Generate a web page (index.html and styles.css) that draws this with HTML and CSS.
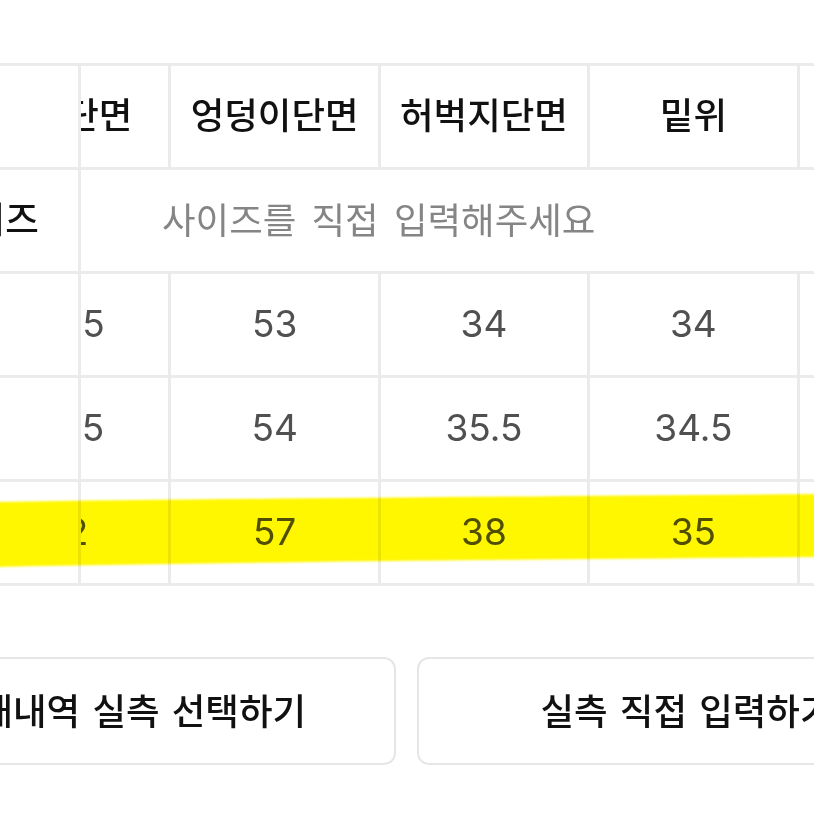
FILE: index.html
```html
<!DOCTYPE html>
<html lang="ko">
<head>
<meta charset="utf-8">
<title>실측 사이즈</title>
<link rel="stylesheet" href="styles.css">
</head>
<body>
<div class="page">
  <div class="screen">
    <div class="size-table">
      <div class="fixed-col">
        <div class="cell head"></div>
        <div class="cell label">사이즈</div>
        <div class="cell num">S</div>
        <div class="cell num">M</div>
        <div class="cell num">L</div>
      </div>
      <div class="scroll-view">
        <div class="grid">
          <div class="cell head">허리단면</div>
          <div class="cell head">엉덩이단면</div>
          <div class="cell head">허벅지단면</div>
          <div class="cell head">밑위</div>
          <div class="cell head">밑단단면</div>

          <div class="cell placeholder">사이즈를 직접 입력해주세요</div>

          <div class="cell num">44.5</div>
          <div class="cell num">53</div>
          <div class="cell num">34</div>
          <div class="cell num">34</div>
          <div class="cell num">21</div>

          <div class="cell num">45.5</div>
          <div class="cell num">54</div>
          <div class="cell num">35.5</div>
          <div class="cell num">34.5</div>
          <div class="cell num">21.5</div>

          <div class="cell num">42</div>
          <div class="cell num">57</div>
          <div class="cell num">38</div>
          <div class="cell num">35</div>
          <div class="cell num">22</div>
        </div>
      </div>
    </div>
    <div class="actions">
      <button class="action-btn">판매내역 실측 선택하기</button>
      <button class="action-btn">실측 직접 입력하기</button>
    </div>
  </div>
  <svg class="highlight" viewBox="0 0 814 814" width="814" height="814" aria-hidden="true">
    <defs>
      <filter id="soft" x="-5%" y="-20%" width="110%" height="140%">
        <feGaussianBlur stdDeviation="1.2"/>
      </filter>
    </defs>
    <path d="M-10 502 C 200 499, 450 497, 830 494 L 830 557 C 450 560, 200 563, -10 567 Z" fill="#fff700" filter="url(#soft)"/>
  </svg>
</div>
</body>
</html>
```

FILE: styles.css
```css
* { box-sizing: border-box; }

html, body {
  margin: 0;
  padding: 0;
  background: #ffffff;
}

.page {
  position: relative;
  width: 814px;
  height: 814px;
  overflow: hidden;
  background: #ffffff;
}

.screen {
  width: 1101px;
  margin-left: -144px;
  padding-top: 63px;
  font-family: "Noto Sans CJK KR", "Noto Sans", sans-serif;
}

.size-table {
  display: flex;
  align-items: flex-start;
}

.fixed-col {
  flex: 0 0 225px;
  display: grid;
  grid-template-rows: repeat(5, 101px);
  gap: 3px;
  padding: 3px;
  background: #ebebeb;
}

.scroll-view {
  flex: 1;
  overflow: hidden;
}

.grid {
  width: 1050px;
  margin-left: -122px;
  display: grid;
  grid-template-columns: repeat(5, 1fr);
  grid-template-rows: repeat(5, 101px);
  gap: 3px;
  padding: 3px;
  background: #ebebeb;
}

.cell {
  background: #ffffff;
  display: flex;
  align-items: center;
  justify-content: center;
  white-space: nowrap;
  overflow: hidden;
}

.fixed-col .cell {
  padding-left: 40px;
}

.head,
.label {
  font-size: 36.5px;
  font-weight: 500;
  color: #111111;
  padding-bottom: 6px;
}

.num {
  font-family: "Inter", "Liberation Sans", sans-serif;
  font-size: 37px;
  font-weight: 400;
  color: #505050;
  padding-bottom: 3px;
}

.fixed-col .num {
  font-family: "Noto Sans CJK KR", sans-serif;
  font-size: 36.5px;
  color: #111111;
}

.placeholder {
  grid-column: 1 / -1;
  justify-content: flex-start;
  padding-left: 200px;
  padding-bottom: 4px;
  font-size: 36.5px;
  word-spacing: 5px;
  color: #858585;
}

.actions {
  display: flex;
  gap: 21px;
  margin-top: 71px;
}

.action-btn {
  flex: 1;
  height: 108px;
  background: #ffffff;
  border: 2px solid #e6e6e6;
  border-radius: 12px;
  font-family: "Noto Sans CJK KR", sans-serif;
  font-size: 36.5px;
  font-weight: 500;
  word-spacing: 2px;
  color: #111111;
  padding: 0 0 4px;
}

.highlight {
  position: absolute;
  left: 0;
  top: 0;
  pointer-events: none;
  mix-blend-mode: multiply;
}
```
